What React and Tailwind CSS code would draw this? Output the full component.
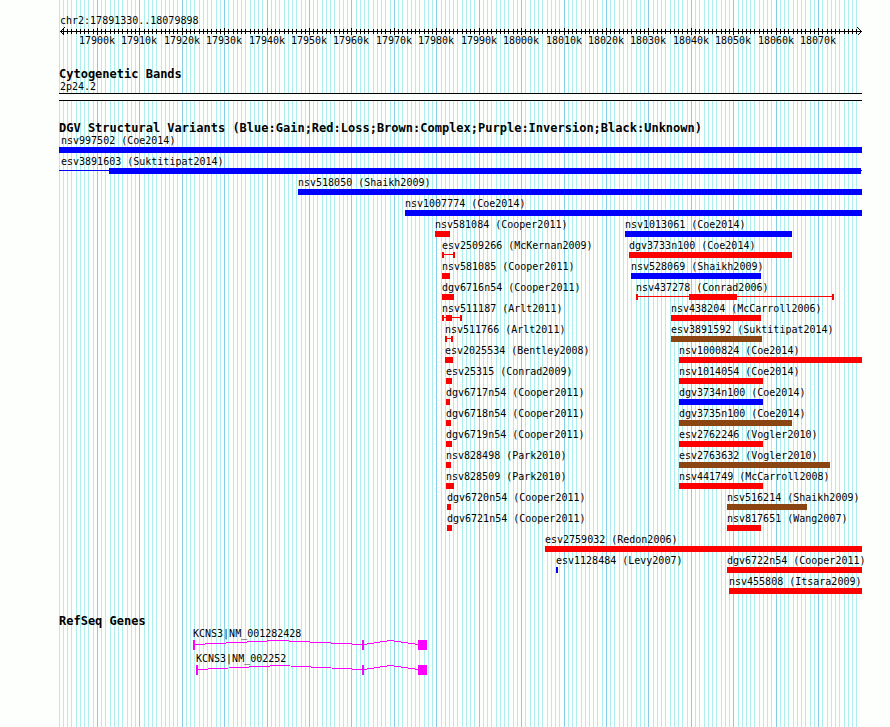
// Genome browser view of chr2:17891330..18079898.

const SPAN = 803; // design units across the track area
const REGION_START = 17891330;
const UNITS_PER_BP = 800 / 188568;

const pct = (units) => `${(units / SPAN) * 100}%`;
const bpToUnits = (bp) => Math.round(60.1 + (bp - REGION_START) * UNITS_PER_BP) - 59;

const TICKS = Array.from({ length: 189 }, (_, i) => {
  const kb = 17891 + i;
  return { kb, x: bpToUnits(kb * 1000), major: kb % 10 === 0 };
});

const COLORS = {
  gain: { fill: "bg-[#0000ff]", line: "border-[#0000ff]" },
  loss: { fill: "bg-[#ff0000]", line: "border-[#ff0000]" },
  complex: { fill: "bg-[#8b4513]", line: "border-[#8b4513]" },
};

// Each feature: name, study, kind, bar [start, end], optional range [start, end].
const f = (name, study, kind, bar, range, caps = true) => ({ name, study, kind, bar, range, caps });

const VARIANTS = [
  [f("nsv997502", "Coe2014", "gain", [0, 803])],
  [f("esv3891603", "Suktitipat2014", "gain", [50, 802], [0, 803], false)],
  [f("nsv518050", "Shaikh2009", "gain", [239, 803])],
  [f("nsv1007774", "Coe2014", "gain", [346, 803])],
  [f("nsv581084", "Cooper2011", "loss", [376, 391]), f("nsv1013061", "Coe2014", "gain", [566, 733])],
  [f("esv2509266", "McKernan2009", "loss", null, [383, 396]), f("dgv3733n100", "Coe2014", "loss", [570, 733])],
  [f("nsv581085", "Cooper2011", "loss", [383, 391]), f("nsv528069", "Shaikh2009", "gain", [572, 702])],
  [f("dgv6716n54", "Cooper2011", "loss", [383, 395]), f("nsv437278", "Conrad2006", "loss", [630, 678], [577, 775])],
  [f("nsv511187", "Arlt2011", "loss", [387, 393], [383, 403]), f("nsv438204", "McCarroll2006", "loss", [612, 702])],
  [f("nsv511766", "Arlt2011", "loss", null, [386, 394]), f("esv3891592", "Suktitipat2014", "complex", [612, 703])],
  [f("esv2025534", "Bentley2008", "loss", [386, 394]), f("nsv1000824", "Coe2014", "loss", [620, 803])],
  [f("esv25315", "Conrad2009", "loss", [387, 393]), f("nsv1014054", "Coe2014", "loss", [620, 704])],
  [f("dgv6717n54", "Cooper2011", "loss", [387, 391]), f("dgv3734n100", "Coe2014", "gain", [620, 704])],
  [f("dgv6718n54", "Cooper2011", "loss", [387, 392]), f("dgv3735n100", "Coe2014", "complex", [620, 733])],
  [f("dgv6719n54", "Cooper2011", "loss", [387, 393]), f("esv2762246", "Vogler2010", "loss", [620, 704])],
  [f("nsv828498", "Park2010", "loss", [387, 392]), f("esv2763632", "Vogler2010", "complex", [620, 771])],
  [f("nsv828509", "Park2010", "loss", [387, 395]), f("nsv441749", "McCarroll2008", "loss", [620, 704])],
  [f("dgv6720n54", "Cooper2011", "loss", [388, 392]), f("nsv516214", "Shaikh2009", "complex", [668, 748])],
  [f("dgv6721n54", "Cooper2011", "loss", [388, 393]), f("nsv817651", "Wang2007", "loss", [668, 702])],
  [f("esv2759032", "Redon2006", "loss", [486, 803])],
  [f("esv1128484", "Levy2007", "gain", [497, 499]), f("dgv6722n54", "Cooper2011", "loss", [668, 803])],
  [f("nsv455808", "Itsara2009", "loss", [670, 803])],
];

const GENES = [
  { label: "KCNS3|NM_001282428", start: 134, peak: 219 },
  { label: "KCNS3|NM_002252", start: 137, peak: 221 },
];

function Gridlines() {
  return (
    <div className="absolute inset-0 grid grid-cols-1 grid-rows-1" aria-hidden="true">
      {TICKS.map((t) => (
        <div
          key={t.kb}
          className={`col-start-1 row-start-1 w-px ${t.major ? "bg-[#87ceeb]" : "bg-[#afeeee]"}`}
          style={{ marginLeft: pct(t.x) }}
        />
      ))}
    </div>
  );
}

function ArrowHead({ d, className }) {
  return (
    <svg
      className={`col-start-1 row-start-1 h-[9px] w-[5px] ${className}`}
      viewBox="0 0 5 9"
      shapeRendering="crispEdges"
      aria-hidden="true"
    >
      <path d={d} fill="none" stroke="#000" />
    </svg>
  );
}

function Ruler() {
  return (
    <div>
      <div className="grid h-[9px] grid-cols-1 grid-rows-1 items-center">
        <div className="col-start-1 row-start-1 ml-px h-px bg-black" />
        <ArrowHead className="ml-px" d="M4.5 0.5 L0.5 4.5 L4.5 8.5" />
        <ArrowHead className="justify-self-end" d="M0.5 0.5 L4.5 4.5 L0.5 8.5" />
        {TICKS.slice(1).map((t) => (
          <div
            key={t.kb}
            className={`col-start-1 row-start-1 w-px bg-black ${t.major ? "h-[7px]" : "h-[5px]"}`}
            style={{ marginLeft: pct(t.x) }}
          />
        ))}
      </div>
      <div className="-mt-px grid grid-cols-1">
        {TICKS.filter((t) => t.major).map((t) => (
          <div key={t.kb} className="col-start-1 row-start-1 flex w-0 justify-center" style={{ marginLeft: pct(t.x) }}>
            <span>{t.kb}k</span>
          </div>
        ))}
      </div>
    </div>
  );
}

function TrackTitle({ children }) {
  return <h2 className="text-[12px] leading-[13px] font-bold">{children}</h2>;
}

function Feature({ name, study, kind, bar, range, caps }) {
  const [start, end] = range || bar;
  const color = COLORS[kind];
  return (
    <div className="col-start-1 row-start-1">
      <p className="w-0" style={{ marginLeft: pct(Math.max(start, 2)) }}>
        {name} ({study})
      </p>
      <div className="grid h-[6px] grid-cols-1 grid-rows-1">
        {range && (
          <div
            className={`col-start-1 row-start-1 ${caps ? "border-x-2" : ""} ${color.line}`}
            style={{ marginLeft: pct(start), width: pct(end - start) }}
          >
            <div className={`h-[3px] border-b ${color.line}`} />
          </div>
        )}
        {bar && (
          <div
            className={`col-start-1 row-start-1 ${color.fill}`}
            style={{ marginLeft: pct(bar[0]), width: pct(bar[1] - bar[0]) }}
          />
        )}
      </div>
    </div>
  );
}

function Gene({ label, start, peak }) {
  return (
    <li className="pb-[3px]">
      <p className="w-0" style={{ marginLeft: pct(start) }}>
        {label}
      </p>
      <svg
        className="block h-[10px] w-full"
        viewBox="0 0 803 10"
        preserveAspectRatio="none"
        shapeRendering="crispEdges"
        aria-hidden="true"
      >
        <g fill="none" stroke="#ff00ff">
          <path d={`M${start + 2} 4.5 L${peak} 0.5 L303 4.5`} />
          <path d="M305 4.5 L331 0.5 L359 4.5" />
        </g>
        <g fill="#ff00ff">
          <rect x={start} y="0" width="2" height="10" />
          <rect x="303" y="0" width="2" height="10" />
          <rect x="359" y="0" width="9" height="10" />
        </g>
      </svg>
    </li>
  );
}

export default function App() {
  return (
    <main className="flex min-h-screen bg-[#fdfffc] pr-7 pl-[59px] font-['DejaVu_Sans_Mono',monospace] text-[10px] leading-3 whitespace-nowrap text-black">
      <div className="relative min-w-0 flex-1">
        <Gridlines />
        <div className="relative flex flex-col gap-5 pt-[15px] pb-10">
          <header>
            <h1 className="pl-px">chr2:17891330..18079898</h1>
            <Ruler />
          </header>

          <section className="pt-px">
            <TrackTitle>Cytogenetic Bands</TrackTitle>
            <p className="pl-px">2p24.2</p>
            <div className="h-2 border-y border-black bg-[#fdfffc]" />
          </section>

          <section className="pt-px">
            <TrackTitle>
              DGV Structural Variants (Blue:Gain;Red:Loss;Brown:Complex;Purple:Inversion;Black:Unknown)
            </TrackTitle>
            <ul className="flex flex-col gap-[3px]">
              {VARIANTS.map((row) => (
                <li key={row[0].name} className="grid grid-cols-1">
                  {row.map((v) => (
                    <Feature key={v.name} {...v} />
                  ))}
                </li>
              ))}
            </ul>
          </section>

          <section className="pt-px">
            <TrackTitle>RefSeq Genes</TrackTitle>
            <ul>
              {GENES.map((g) => (
                <Gene key={g.label} {...g} />
              ))}
            </ul>
          </section>
        </div>
      </div>
    </main>
  );
}
